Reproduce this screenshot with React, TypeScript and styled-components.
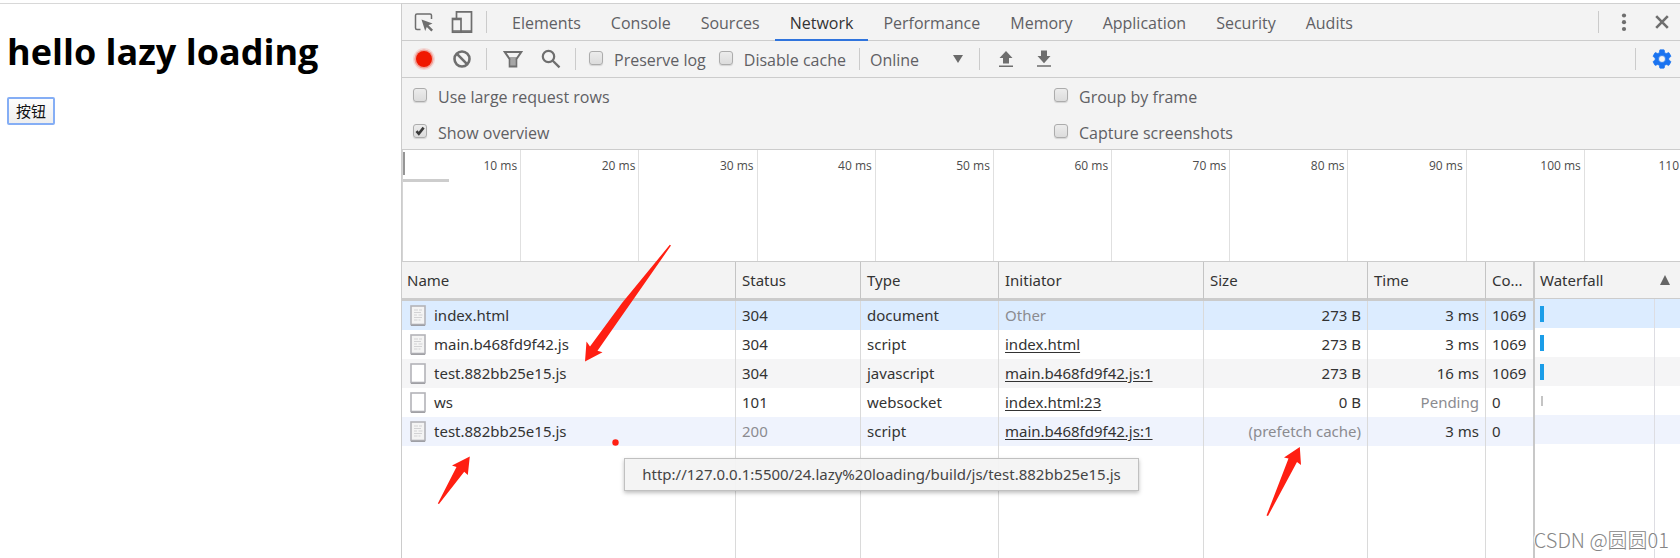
import React from "react";
import styled, { createGlobalStyle, css } from "styled-components";

const Global = createGlobalStyle`
  * { box-sizing: border-box; }
  html, body { margin: 0; height: 100%; background: #fff; }
  #root { height: 100%; }
  body, button, select, input, table {
    font-family: "Open Sans", "Noto Sans CJK SC", sans-serif;
    font-size: 16px;
  }
`;

const LINE = "#cccccc";

const Screen = styled.div`
  position: relative;
  display: grid;
  grid-template-columns: 401fr 1279fr;
  min-height: 100vh;
  padding-top: 3px;
  overflow: hidden;
`;

const Page = styled.main`
  border-top: 1px solid #d8d8d8;
  padding: 20px 7px;
`;

const Heading = styled.h1`
  margin: 0 0 18px;
  font-size: 36px;
  line-height: 55px;
  font-weight: 700;
  color: #000;
  white-space: nowrap;
`;

const PageButton = styled.button`
  display: block;
  width: 48px;
  height: 28px;
  padding: 0;
  border: 2px solid #85aef5;
  border-radius: 2px;
  background: linear-gradient(#fdfdfd, #eeeeee);
  font-size: 15px;
  line-height: 20px;
  color: #111;
`;

const DevTools = styled.section`
  display: flex;
  flex-direction: column;
  min-width: 0;
  border-left: 1px solid ${LINE};
  border-top: 1px solid #d0d0d0;
  color: #5f6064;
`;

const Bar = styled.div`
  display: flex;
  align-items: center;
  height: 37px;
  flex: none;
  background: #f3f3f3;
  border-bottom: 1px solid ${LINE};
`;

const Divider = styled.span`
  width: 1px;
  height: 22px;
  background: #cbcbcb;
`;

const Spacer = styled.span`
  flex: 1;
`;

const IconButton = styled.button<{ $width: number }>`
  display: flex;
  align-items: center;
  justify-content: center;
  width: ${(p) => p.$width}px;
  height: 30px;
  padding: 0;
  border: 0;
  background: none;
  color: #6e6e6e;
`;

const Tabs = styled.nav`
  display: flex;
  height: 37px;
  margin-left: 2px;
`;

const Tab = styled.button<{ $active?: boolean }>`
  height: 37px;
  padding: 3px 15px 0;
  border: 0;
  background: none;
  line-height: 22px;
  color: ${(p) => (p.$active ? "#333" : "#5f6064")};
  border-bottom: 2px solid ${(p) => (p.$active ? "#2f74dd" : "transparent")};
`;

const CheckLabel = styled.label`
  display: flex;
  align-items: center;
  gap: 11px;
  padding-top: 2px;
  line-height: 22px;
  white-space: nowrap;
`;

const CheckBox = styled.span`
  position: relative;
  display: block;
  width: 14px;
  height: 14px;
  margin-bottom: 4px;

  input {
    appearance: none;
    display: block;
    width: 14px;
    height: 14px;
    margin: 0;
    border: 1px solid #acacac;
    border-radius: 3px;
    background: linear-gradient(#ececec, #dcdcdc);
    box-shadow: 0 1px 1px #d4d4d4;
  }
  svg {
    position: absolute;
    inset: 0;
    display: none;
    pointer-events: none;
  }
  input:checked + svg {
    display: block;
  }
`;

const Throttle = styled.span`
  position: relative;
  width: 93px;
  margin: 0 16px 0 4px;

  select {
    appearance: none;
    display: block;
    width: 100%;
    padding: 2px 0 0;
    border: 0;
    background: none;
    line-height: 22px;
    color: #5f6064;
  }
  svg {
    position: absolute;
    right: 0;
    top: 8px;
    pointer-events: none;
  }
`;

const ToolGroup = styled.div<{ $gap: number; $pad: number; $end?: boolean }>`
  display: flex;
  align-items: center;
  gap: ${(p) => p.$gap}px;
  padding: 0 ${(p) => (p.$end ? 0 : p.$pad)}px 0 ${(p) => p.$pad}px;
`;

const Settings = styled.div`
  display: grid;
  grid-template-columns: 641fr 637fr;
  grid-auto-rows: 36px;
  flex: none;
  height: 72px;
  background: #f3f3f3;
  border-bottom: 1px solid ${LINE};

  label {
    padding: 2px 0 0 11px;
  }
`;

const Overview = styled.div`
  position: relative;
  display: grid;
  grid-template-columns: repeat(10, 118fr) 95fr;
  flex: none;
  height: 112px;
  overflow: hidden;
  border-left: 1px solid #d4d4d4;
  border-bottom: 1px solid ${LINE};
`;

const Tick = styled.div`
  border-right: 1px solid #e0e0e0;
  padding: 6px 3px 0 0;
  text-align: right;
  font-size: 12px;
  line-height: 20px;
  color: #4c4c4c;
  &:last-child {
    border-right: 0;
    padding-right: 1px;
  }
`;

const OverviewHandle = styled.i`
  position: absolute;
  left: 0;
  top: 2px;
  width: 2px;
  height: 23px;
  background: #969696;
`;

const OverviewSpan = styled.i`
  position: absolute;
  left: 0;
  top: 29px;
  width: 46px;
  height: 3px;
  background: #cdcdcd;
`;

const Log = styled.div`
  display: grid;
  grid-template-columns: 1133fr 145fr;
  flex: 1;
  min-height: 0;
  font-family: "Noto Sans", "Noto Sans CJK SC", sans-serif;
  font-size: 15px;
`;

const Table = styled.table`
  width: 100%;
  height: 100%;
  table-layout: fixed;
  border-collapse: separate;
  border-spacing: 0;
  color: #333;
  font: inherit;
  line-height: 22px;
`;

const Col = styled.col<{ $width?: number }>`
  width: ${(p) => (p.$width ? `${p.$width}px` : "auto")};
`;

const cellLine = css`
  border-right: 1px solid #dadada;
  &:last-child { border-right: 2px solid #c8c8c8; }
`;

const Th = styled.th`
  height: 39px;
  padding: 0 6px;
  background: #f3f3f3;
  border-bottom: 3px solid #cbcbcb;
  border-right: 1px solid #c4c4c4;
  &:first-child { padding-left: 5px; }
  &:last-child { border-right: 2px solid #c8c8c8; padding-right: 0; }
  font-weight: 400;
  text-align: left;
  white-space: nowrap;
`;

const rowColors = { selected: "#dcecff", plain: "#ffffff", odd: "#f5f5f6", hover: "#eff3fd" };
type Tone = keyof typeof rowColors;

const Tr = styled.tr<{ $tone: Tone }>`
  background: ${(p) => rowColors[p.$tone]};
`;

const Td = styled.td<{ $end?: boolean; $dim?: boolean }>`
  ${cellLine}
  height: 29px;
  padding: 0 6px 2px;
  &:last-child { padding-right: 0; }
  text-align: ${(p) => (p.$end ? "right" : "left")};
  color: ${(p) => (p.$dim ? "#8b8b90" : "#333")};
  white-space: nowrap;

  a {
    color: inherit;
    text-decoration: underline;
    text-underline-offset: 2px;
  }
`;

const Filler = styled.td`
  ${cellLine}
  padding: 0;
`;

const FileName = styled.span`
  display: flex;
  align-items: center;
  gap: 8px;
  height: 22px;
  padding-left: 2px;

  svg { margin-top: 2px; }
`;

const Waterfall = styled.div`
  display: flex;
  flex-direction: column;
`;

const WaterfallHead = styled.div`
  display: flex;
  align-items: center;
  justify-content: space-between;
  height: 37px;
  padding: 0 10px 0 5px;
  background: #f3f3f3;
  border-bottom: 1px solid ${LINE};
  color: #333;
`;

const WaterfallBody = styled.div`
  flex: 1;
  display: grid;
  grid-template-columns: 1fr 25px;
  grid-template-rows: repeat(5, 29px) 1fr;
`;

const Lane = styled.div<{ $tone: Tone }>`
  display: flex;
  align-items: center;
  padding-left: 5px;
  background: ${(p) => rowColors[p.$tone]};
  &:nth-child(odd) { border-right: 1px solid #dddde2; }
`;

const TimeBar = styled.i<{ $pending?: boolean }>`
  width: ${(p) => (p.$pending ? 2 : 4)}px;
  height: ${(p) => (p.$pending ? 10 : 16)}px;
  margin-left: ${(p) => (p.$pending ? 1 : 0)}px;
  background: ${(p) => (p.$pending ? "#c4c4c4" : "#1b9de8")};
`;

const Tooltip = styled.div`
  position: absolute;
  left: 624px;
  top: 458px;
  min-width: 515px;
  height: 33px;
  padding: 0 11px;
  border: 1px solid #c0c0c0;
  background: rgba(243, 243, 243, 0.94);
  box-shadow: 0 2px 4px rgba(0, 0, 0, 0.25);
  font-family: "Noto Sans", sans-serif;
  font-size: 15px;
  line-height: 31px;
  color: #444;
  text-align: center;
  white-space: nowrap;
`;

const Annotations = styled.svg`
  position: absolute;
  left: 0;
  top: 0;
  pointer-events: none;
`;

const Watermark = styled.div`
  position: absolute;
  right: 11px;
  bottom: 3px;
  font-family: "Noto Sans CJK SC", sans-serif;
  font-weight: 300;
  font-size: 20px;
  line-height: 30px;
  color: #858585;
  text-shadow: 1px 1px 0 #fff, -1px -1px 0 #fff;
`;

function Check({ label, checked }: { label: string; checked?: boolean }) {
  return (
    <CheckLabel>
      <CheckBox>
        <input type="checkbox" defaultChecked={checked} />
        <svg width="14" height="14" viewBox="0 0 14 14" aria-hidden="true">
          <path d="M3.5 7.2 5.8 9.8 10.6 3.6" fill="none" stroke="#3a3a3a" strokeWidth="2.6" />
        </svg>
      </CheckBox>
      {label}
    </CheckLabel>
  );
}

function FileIcon({ lines }: { lines?: boolean }) {
  return (
    <svg width="16" height="21" viewBox="0 0 16 21" aria-hidden="true">
      <rect x="1" y="1" width="14" height="18.5" fill={lines ? "#f4f4f4" : "#fff"} stroke="#b3b3b8" strokeWidth="1.6" />
      <path d="M1 20.3h14" stroke="#8f8f94" strokeWidth="1" />
      {lines && (
        <path
          d="M4 5h4M9 5h3M4 7.5h7M4 10h3M8.5 10h4M4 12.5h8M4 15h3.5M8.5 15h2"
          stroke="#d2d2d4"
          strokeWidth="1"
        />
      )}
    </svg>
  );
}

const tabs = ["Elements", "Console", "Sources", "Network", "Performance", "Memory", "Application", "Security", "Audits"];
const ticks = ["10 ms", "20 ms", "30 ms", "40 ms", "50 ms", "60 ms", "70 ms", "80 ms", "90 ms", "100 ms", "110"];

type Request = {
  name: string; lines?: boolean; status: string; statusDim?: boolean; type: string;
  initiator: string; link?: boolean; size: string; sizeDim?: boolean;
  time: string; conn: string; tone: Tone; bar?: "done" | "pending";
};

const requests: Request[] = [
  { name: "index.html", lines: true, status: "304", type: "document", initiator: "Other", size: "273 B", time: "3 ms", conn: "1069", tone: "selected", bar: "done" },
  { name: "main.b468fd9f42.js", lines: true, status: "304", type: "script", initiator: "index.html", link: true, size: "273 B", time: "3 ms", conn: "1069", tone: "plain", bar: "done" },
  { name: "test.882bb25e15.js", status: "304", type: "javascript", initiator: "main.b468fd9f42.js:1", link: true, size: "273 B", time: "16 ms", conn: "1069", tone: "odd", bar: "done" },
  { name: "ws", status: "101", type: "websocket", initiator: "index.html:23", link: true, size: "0 B", time: "Pending", conn: "0", tone: "plain", bar: "pending" },
  { name: "test.882bb25e15.js", lines: true, status: "200", statusDim: true, type: "script", initiator: "main.b468fd9f42.js:1", link: true, size: "(prefetch cache)", sizeDim: true, time: "3 ms", conn: "0", tone: "hover" },
];

const columns: { title: string; width?: number }[] = [
  { title: "Name" },
  { title: "Status", width: 125 },
  { title: "Type", width: 138 },
  { title: "Initiator", width: 205 },
  { title: "Size", width: 164 },
  { title: "Time", width: 118 },
  { title: "Co...", width: 49 },
];

export default function App() {
  return (
    <>
      <Global />
      <Screen>
        <Page>
          <Heading>hello lazy loading</Heading>
          <PageButton>按钮</PageButton>
        </Page>

        <DevTools>
          <Bar>
            <ToolGroup $gap={10} $pad={8}>
              <IconButton $width={28} aria-label="Inspect element">
                <svg width="20" height="20" viewBox="0 0 20 20" fill="none">
                  <path d="M6.5 17.5H3A1.5 1.5 0 0 1 1.5 16V3.5A1.5 1.5 0 0 1 3 2h13A1.5 1.5 0 0 1 17.5 3.5V7" stroke="currentColor" strokeWidth="1.5" />
                  <path d="M7.5 7.5l11 4-4 1.8 4.5 4.5-1.7 1.7-4.5-4.5-1.6 4z" fill="currentColor" />
                </svg>
              </IconButton>
              <IconButton $width={28} aria-label="Toggle device toolbar">
                <svg width="22" height="24" viewBox="0 0 22 24" fill="none" stroke="currentColor">
                  <path d="M5.5 8V1.8h15v20.4H10" strokeWidth="1.7" />
                  <rect x="1.5" y="8.5" width="8.5" height="13.7" strokeWidth="1.7" />
                  <path d="M1.5 9.5H10M1.5 21H20" strokeWidth="1.5" />
                </svg>
              </IconButton>
              <Divider />
            </ToolGroup>
            <Tabs>
              {tabs.map((t) => (
                <Tab key={t} $active={t === "Network"}>{t}</Tab>
              ))}
            </Tabs>
            <Spacer />
            <Divider />
            <ToolGroup $gap={0} $pad={5} $end>
              <IconButton $width={40} aria-label="More options">
                <svg width="6" height="20" viewBox="0 0 6 20" fill="currentColor">
                  <circle cx="3" cy="3.5" r="2.1" /><circle cx="3" cy="10.2" r="2.1" /><circle cx="3" cy="17" r="2.1" />
                </svg>
              </IconButton>
              <IconButton $width={36} aria-label="Close">
                <svg width="14" height="14" viewBox="0 0 14 14" stroke="currentColor" strokeWidth="2.6">
                  <path d="M1.2 1.2l11.6 11.6M12.8 1.2L1.2 12.8" />
                </svg>
              </IconButton>
            </ToolGroup>
          </Bar>

          <Bar>
            <ToolGroup $gap={10} $pad={8}>
              <IconButton $width={28} aria-label="Record">
                <svg width="24" height="24" viewBox="0 0 24 24">
                  <circle cx="12" cy="12" r="11" fill="#f01800" opacity="0.12" />
                  <circle cx="12" cy="12" r="9.6" fill="#f01800" opacity="0.3" />
                  <circle cx="12" cy="12" r="8" fill="#f01800" />
                </svg>
              </IconButton>
              <IconButton $width={28} aria-label="Clear">
                <svg width="18" height="18" viewBox="0 0 18 18" fill="none" stroke="currentColor" strokeWidth="2.6">
                  <circle cx="9" cy="9" r="7.5" />
                  <path d="M3.7 3.7l10.6 10.6" />
                </svg>
              </IconButton>
              <Divider />
            </ToolGroup>
            <ToolGroup $gap={10} $pad={4}>
              <IconButton $width={28} aria-label="Filter">
                <svg width="20" height="18" viewBox="0 0 20 18">
                  <path d="M6 7h8l-2 3v6.5H8V10z" fill="#a5a5a5" />
                  <path d="M1.8 2h16.4L13.3 9.2v7.3H6.7V9.2z" fill="none" stroke="currentColor" strokeWidth="2" />
                </svg>
              </IconButton>
              <IconButton $width={28} aria-label="Search">
                <svg width="20" height="20" viewBox="0 0 20 20" fill="none" stroke="currentColor">
                  <circle cx="7.5" cy="7.5" r="5.7" strokeWidth="2.2" />
                  <path d="M11.5 11.5l7 6.8" strokeWidth="2.4" />
                </svg>
              </IconButton>
            </ToolGroup>
            <ToolGroup $gap={13} $pad={6}>
              <Divider />
              <Check label="Preserve log" />
              <Check label="Disable cache" />
              <Divider />
            </ToolGroup>
            <Throttle>
              <select aria-label="Throttling"><option>Online</option></select>
              <svg width="10" height="8" viewBox="0 0 10 8"><path d="M0 0h10L5 8z" fill="#6a6a6a" /></svg>
            </Throttle>
            <Divider />
            <ToolGroup $gap={10} $pad={12}>
              <IconButton $width={28} aria-label="Import HAR">
                <svg width="16" height="18" viewBox="0 0 16 18" fill="currentColor">
                  <path d="M8 1l6.5 7H11v5.5H5V8H1.5zM1 15.5h14V17H1z" />
                </svg>
              </IconButton>
              <IconButton $width={28} aria-label="Export HAR">
                <svg width="16" height="18" viewBox="0 0 16 18" fill="currentColor">
                  <path d="M5 .5h6V6h3.5L8 13.2 1.5 6H5zM1 15.2h14v1.5H1z" />
                </svg>
              </IconButton>
            </ToolGroup>
            <Spacer />
            <Divider />
            <ToolGroup $gap={0} $pad={8} $end>
              <IconButton $width={36} aria-label="Network settings">
                <svg width="22" height="22" viewBox="0 0 24 24">
                  <path
                    fill="#1a73f0"
                    stroke="#1a73f0"
                    strokeWidth="0.8"
                    fillRule="evenodd"
                    d="M19.43 12.98c.04-.32.07-.64.07-.98s-.03-.66-.07-.98l2.11-1.65c.19-.15.24-.42.12-.64l-2-3.46c-.12-.22-.39-.3-.61-.22l-2.49 1c-.52-.4-1.08-.73-1.69-.98l-.38-2.65A.488.488 0 0 0 14 2h-4c-.25 0-.46.18-.49.42l-.38 2.65c-.61.25-1.17.59-1.69.98l-2.49-1c-.23-.09-.49 0-.61.22l-2 3.46c-.13.22-.07.49.12.64l2.11 1.65c-.04.32-.07.65-.07.98s.03.66.07.98l-2.11 1.65c-.19.15-.24.42-.12.64l2 3.46c.12.22.39.3.61.22l2.49-1c.52.4 1.08.73 1.69.98l.38 2.65c.03.24.24.42.49.42h4c.25 0 .46-.18.49-.42l.38-2.65c.61-.25 1.17-.59 1.69-.98l2.49 1c.23.09.49 0 .61-.22l2-3.46c.12-.22.07-.49-.12-.64zM12 15.8a3.8 3.8 0 1 1 0-7.6 3.8 3.8 0 0 1 0 7.6z"
                  />
                </svg>
              </IconButton>
            </ToolGroup>
          </Bar>

          <Settings>
            <Check label="Use large request rows" />
            <Check label="Group by frame" />
            <Check label="Show overview" checked />
            <Check label="Capture screenshots" />
          </Settings>

          <Overview>
            <OverviewHandle />
            <OverviewSpan />
            {ticks.map((t) => (
              <Tick key={t}>{t}</Tick>
            ))}
          </Overview>

          <Log>
            <Table>
              <colgroup>
                {columns.map((c) => <Col key={c.title} $width={c.width} />)}
              </colgroup>
              <thead>
                <tr>{columns.map((c) => <Th key={c.title}>{c.title}</Th>)}</tr>
              </thead>
              <tbody>
                {requests.map((r, i) => (
                  <Tr key={i} $tone={r.tone}>
                    <Td><FileName><FileIcon lines={r.lines} />{r.name}</FileName></Td>
                    <Td $dim={r.statusDim}>{r.status}</Td>
                    <Td>{r.type}</Td>
                    <Td $dim={!r.link}>{r.link ? <a href="#source">{r.initiator}</a> : r.initiator}</Td>
                    <Td $end $dim={r.sizeDim}>{r.size}</Td>
                    <Td $end $dim={r.time === "Pending"}>{r.time}</Td>
                    <Td>{r.conn}</Td>
                  </Tr>
                ))}
                <tr>{columns.map((c) => <Filler key={c.title} />)}</tr>
              </tbody>
            </Table>
            <Waterfall>
              <WaterfallHead>
                Waterfall
                <svg width="10" height="10" viewBox="0 0 10 10" aria-hidden="true"><path d="M5 0l5 10H0z" fill="#666" /></svg>
              </WaterfallHead>
              <WaterfallBody>
                {requests.map((r, i) => (
                  <React.Fragment key={i}>
                    <Lane $tone={r.tone}>{r.bar && <TimeBar $pending={r.bar === "pending"} />}</Lane>
                    <Lane $tone={r.tone} />
                  </React.Fragment>
                ))}
                <Lane $tone="plain" />
                <Lane $tone="plain" />
              </WaterfallBody>
            </Waterfall>
          </Log>
        </DevTools>

        <Tooltip role="tooltip">http://127.0.0.1:5500/24.lazy%20loading/build/js/test.882bb25e15.js</Tooltip>
        <Annotations width="1680" height="558" viewBox="0 0 1680 558" fill="#ff1f12" aria-hidden="true">
          <path d="M671 245.500 L597.500 350.800 L602.500 352.200 L585 361.500 L586.500 341.500 L590 346.500 L622 303 L669.800 244.800z" />
          <path d="M437.800 503.500 L456.500 467 L452 465.500 L469.800 456.500 L467.800 475 L464.200 471.800 L439 504z" />
          <path d="M1266.500 515.500 L1288.500 458.500 L1284 457.500 L1299.800 447 L1301 465 L1297 462 L1268 516z" />
          <circle cx="615.5" cy="442.5" r="3.2" />
        </Annotations>
        <Watermark>CSDN @圆圆01</Watermark>
      </Screen>
    </>
  );
}
